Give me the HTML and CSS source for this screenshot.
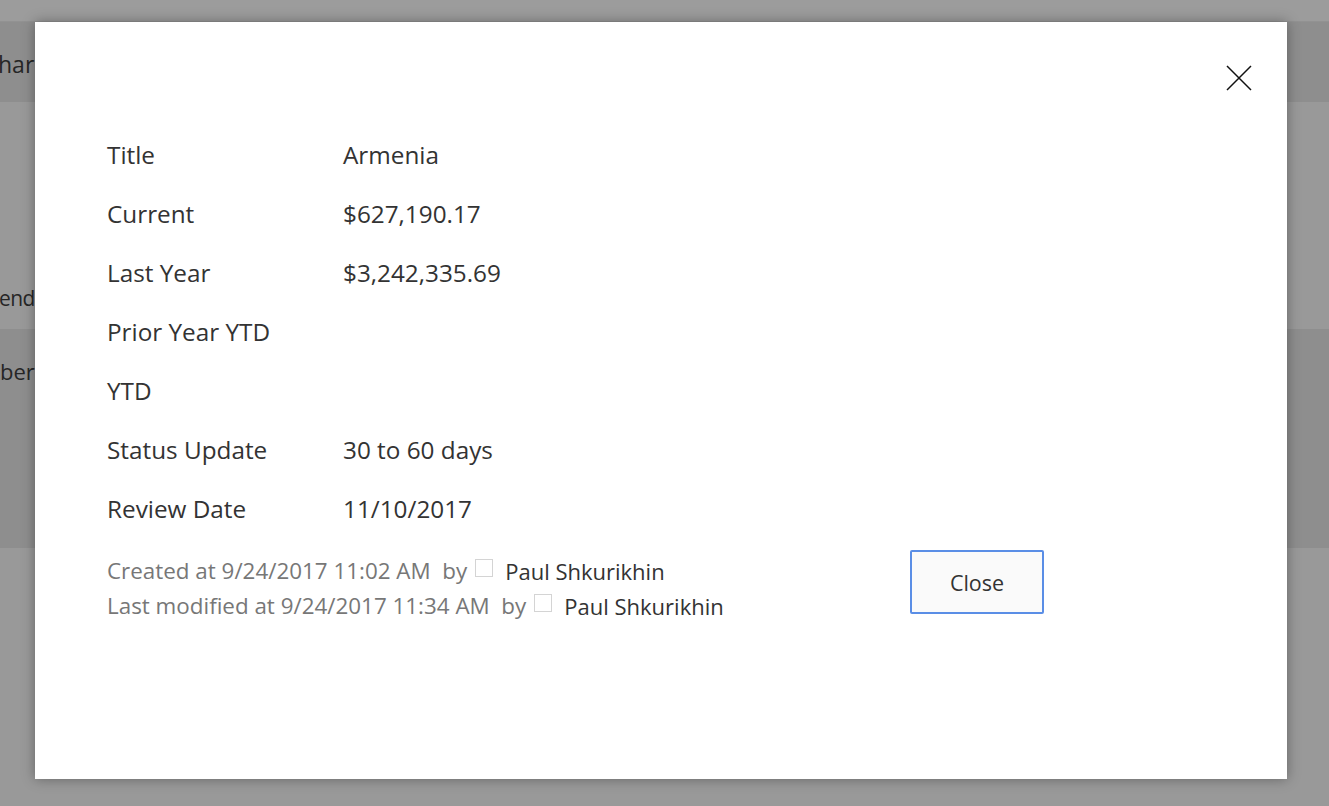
FILE: index.html
```html
<!DOCTYPE html>
<html>
<head>
<meta charset="utf-8">
<link rel="stylesheet" href="styles.css">
</head>
<body>
<div class="page">
  <div class="topbar"></div>
  <div class="band band-dark band-head"><span class="bg-text head-text">har</span></div>
  <div class="band band-light band-mid"><span class="bg-text end-text">end</span></div>
  <div class="band band-dark band-table"><span class="bg-text ber-text">ber</span></div>
  <div class="band band-light band-rest"></div>
</div>

<div class="modal">
  <button class="x-btn" aria-label="Close">
    <svg width="26" height="26" viewBox="0 0 26 26"><path d="M1 1 L25 25 M25 1 L1 25" stroke="#111" stroke-width="1.5" fill="none"/></svg>
  </button>
  <div class="fields">
    <div class="label">Title</div><div class="value">Armenia</div>
    <div class="label">Current</div><div class="value">$627,190.17</div>
    <div class="label">Last Year</div><div class="value">$3,242,335.69</div>
    <div class="label">Prior Year YTD</div><div class="value"></div>
    <div class="label">YTD</div><div class="value"></div>
    <div class="label">Status Update</div><div class="value">30 to 60 days</div>
    <div class="label">Review Date</div><div class="value">11/10/2017</div>
  </div>
  <div class="footer">
    <div class="meta">
      <div class="meta-row">Created at 9/24/2017 11:02 AM&nbsp; by<span class="box"></span><span class="user">Paul Shkurikhin</span></div>
      <div class="meta-row">Last modified at 9/24/2017 11:34 AM&nbsp; by<span class="box"></span><span class="user">Paul Shkurikhin</span></div>
    </div>
    <button class="close-btn">Close</button>
  </div>
</div>
</body>
</html>
```

FILE: styles.css
```css
html, body {
  margin: 0;
  padding: 0;
  height: 100%;
  overflow: hidden;
}
body {
  font-family: "Open Sans", "Noto Sans", sans-serif;
  background: #999999;
}
.page {
  display: flex;
  flex-direction: column;
  height: 806px;
}
.topbar {
  height: 21px;
  background: #9c9c9c;
  border-bottom: 1px solid #929292;
}
.band {
  position: relative;
  display: flex;
  align-items: center;
}
.band-dark { background: #8e8e8e; }
.band-light { background: #999999; }
.band-head { height: 80px; }
.band-mid { height: 227px; align-items: flex-end; }
.band-table { height: 219px; align-items: flex-start; }
.band-rest { flex: 1; }
.bg-text {
  font-size: 22px;
  color: #262626;
  white-space: nowrap;
}
.head-text { margin-left: -2px; margin-top: 4px; font-size: 23px; }
.end-text { margin-left: -1px; margin-bottom: 17px; font-size: 21px; letter-spacing: -0.6px; }
.ber-text { margin-left: 0; margin-top: 27px; }

.modal {
  position: absolute;
  left: 35px;
  top: 22px;
  width: 1252px;
  height: 757px;
  background: #ffffff;
  box-shadow: 0 0 12px rgba(0, 0, 0, 0.35);
  box-sizing: border-box;
  padding: 103px 0 0 72px;
}
.x-btn {
  position: absolute;
  top: 43px;
  right: 35px;
  background: none;
  border: 0;
  padding: 0;
  width: 26px;
  height: 26px;
  cursor: pointer;
}
.x-btn svg { display: block; }
.fields {
  display: grid;
  grid-template-columns: 236px auto;
  grid-auto-rows: 59px;
  align-items: center;
  font-size: 24.3px;
  color: #333333;
}
.label, .value { line-height: 32px; }
.footer {
  display: flex;
  align-items: flex-start;
  margin-top: 12px;
}
.meta {
  width: 803px;
  margin-top: 3px;
  font-size: 22.4px;
  color: #777777;
}
.meta-row {
  display: flex;
  align-items: center;
  height: 35px;
  white-space: pre;
}
.box {
  display: inline-block;
  width: 16px;
  height: 16px;
  border: 1px solid #d4d4d4;
  margin: 0 12px 0 8px;
  position: relative;
  top: -3px;
}
.user { color: #333333; font-size: 22px; }
.close-btn {
  width: 134px;
  height: 64px;
  background: #fafafa;
  border: 2px solid #5a8ee6;
  border-radius: 2px;
  font-family: inherit;
  font-size: 21.5px;
  color: #333333;
}
```
